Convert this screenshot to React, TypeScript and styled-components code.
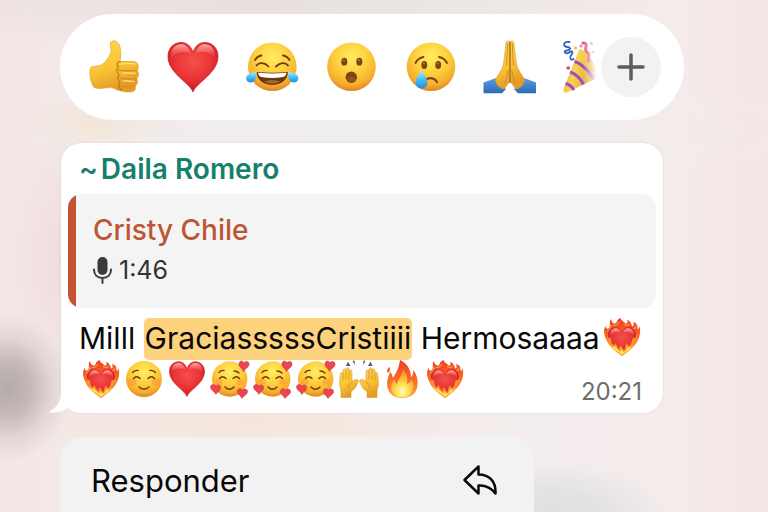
import React from "react";
import styled, { createGlobalStyle } from "styled-components";

const GlobalStyle = createGlobalStyle`
  * { box-sizing: border-box; }
  body {
    margin: 0;
    font-family: Inter, "Liberation Sans", sans-serif;
    color: #080808;
    background: #f5e7e6;
  }
  button { font: inherit; color: inherit; border: 0; padding: 0; cursor: pointer; }
`;

const Page = styled.main`
  min-height: 100vh;
  padding: 14px 84px 0 60px;
  overflow: hidden;
  display: flex;
  flex-direction: column;
  background:
    radial-gradient(ellipse 64px 74px at 8px 388px, #b4aaa9 0%, #c3b8b7 35%, #e2d6d5 68%, transparent 100%),
    radial-gradient(ellipse 120px 60px at 550px 520px, #dfdfdf 0%, #e4e3e3 50%, transparent 100%),
    radial-gradient(ellipse 70px 34px at 96px 122px, #f3e6d8 0%, transparent 100%),
    radial-gradient(ellipse 260px 32px at 260px 424px, #f5e5da 0%, transparent 100%),
    radial-gradient(ellipse 50px 130px at 60px 260px, #f1dcdc 0%, transparent 100%),
    radial-gradient(ellipse 420px 50px at 260px 0, #e6dfdc 0%, transparent 100%),
    radial-gradient(ellipse 420px 60px at 400px 130px, #efeeec 0%, transparent 100%),
    linear-gradient(90deg, #f4e6e6 0, #f3e9e8 60px, #f3eff0 50%, #f5ebeb 680px, #f5e7e6 740px);
`;

const ReactionBar = styled.section`
  height: 106px;
  display: flex;
  align-items: center;
  padding: 0 23px 0 27px;
  border-radius: 53px;
  background: #fff;
`;

const ReactionList = styled.div`
  flex: 1;
  min-width: 0;
  display: flex;
  gap: 25px;
  overflow: hidden;
  mask-image: linear-gradient(90deg, #000 calc(100% - 18px), transparent calc(100% - 4px));
`;

const Reaction = styled.button`
  flex: none;
  width: 54px;
  height: 54px;
  background: none;
  svg { display: block; width: 100%; height: 100%; }
`;

const MoreButton = styled.button`
  flex: none;
  width: 60px;
  height: 60px;
  display: grid;
  place-items: center;
  border-radius: 50%;
  background: #f2f2f2;
`;

const Bubble = styled.article`
  position: relative;
  margin: 23px 21px 0 1px;
  padding: 8px 7px 12px;
  border-radius: 20px;
  background: #fff;
  box-shadow: 0 0 2px rgba(90, 60, 60, 0.16);
`;

const Tail = styled.svg`
  position: absolute;
  left: -12px;
  bottom: 0;
  width: 30px;
  height: 32px;
`;

const Sender = styled.h2`
  display: flex;
  gap: 3px;
  margin: 0;
  padding: 0 11px;
  font-size: 28px;
  line-height: 36px;
  font-weight: 600;
  color: #177f6e;
`;

const Quote = styled.blockquote`
  margin: 7px 0 0;
  height: 114px;
  padding: 18px 25px;
  border-radius: 14px;
  background: linear-gradient(90deg, #c35433 8px, #f4f4f4 8px);
`;

const QuoteAuthor = styled.div`
  font-size: 28px;
  line-height: 36px;
  font-weight: 500;
  color: #bd5636;
`;

const Voice = styled.div`
  display: flex;
  align-items: center;
  gap: 7px;
  margin-top: 4px;
  font-size: 25px;
  line-height: 36px;
  color: #333;
`;

const Body = styled.div`
  display: grid;
  margin-top: 9px;
  padding-left: 11px;
  & > * { grid-area: 1 / 1; }
`;

const Message = styled.p`
  margin: 0;
  font-size: 30px;
  line-height: 42px;
`;

const Highlight = styled.mark`
  padding: 2px 1px 4px;
  border-radius: 5px;
  color: inherit;
  background: #fcd27c;
`;

const InlineEmoji = styled.span`
  display: inline-block;
  width: 38px;
  height: 38px;
  margin: 0 2px 0 3px;
  line-height: 0;
  vertical-align: -7px;
  position: relative;
  svg { width: 100%; height: 100%; overflow: visible; }
`;

const Time = styled.time`
  align-self: end;
  justify-self: end;
  padding-right: 14px;
  font-size: 24px;
  line-height: 18px;
  color: #6d6d6d;
`;

const Menu = styled.nav`
  flex: 1;
  width: 76%;
  margin-top: 24px;
  border-radius: 24px 24px 0 0;
  background: #f3f2f3;
`;

const MenuItem = styled.button`
  width: 100%;
  height: 86px;
  display: flex;
  align-items: center;
  justify-content: space-between;
  padding: 0 37px 0 31px;
  background: none;
  font-size: 31px;
`;

const Defs = styled.svg`
  position: absolute;
  width: 0;
  height: 0;
`;

function Gradients() {
  return (
    <Defs aria-hidden="true">
      <defs>
        <radialGradient id="face" cx="50%" cy="30%" r="70%">
          <stop offset="0" stopColor="#ffee62" />
          <stop offset="0.5" stopColor="#fdce3c" />
          <stop offset="0.82" stopColor="#f6ae2c" />
          <stop offset="1" stopColor="#de8424" />
        </radialGradient>
        <radialGradient id="red" cx="50%" cy="38%" r="62%">
          <stop offset="0" stopColor="#f5504c" />
          <stop offset="0.6" stopColor="#e93334" />
          <stop offset="1" stopColor="#bf1a22" />
        </radialGradient>
        <linearGradient id="shine" x1="0" y1="0" x2="0" y2="1">
          <stop offset="0" stopColor="#ffc4bd" stopOpacity="0.85" />
          <stop offset="1" stopColor="#ff6a60" stopOpacity="0" />
        </linearGradient>
        <linearGradient id="skin" x1="0" y1="0" x2="0.3" y2="1">
          <stop offset="0" stopColor="#ffd84f" />
          <stop offset="0.6" stopColor="#fac336" />
          <stop offset="1" stopColor="#e39a27" />
        </linearGradient>
        <linearGradient id="tear" x1="0" y1="0" x2="0" y2="1">
          <stop offset="0" stopColor="#b5ecff" />
          <stop offset="0.5" stopColor="#4fbff5" />
          <stop offset="1" stopColor="#1d8bdc" />
        </linearGradient>
        <linearGradient id="sleeve" x1="0" y1="0" x2="0" y2="1">
          <stop offset="0" stopColor="#5b9fe4" />
          <stop offset="1" stopColor="#2d68b4" />
        </linearGradient>
        <linearGradient id="cone" x1="0" y1="0" x2="1" y2="0.4">
          <stop offset="0" stopColor="#c98c22" />
          <stop offset="0.45" stopColor="#f9d450" />
          <stop offset="1" stopColor="#dc9e2c" />
        </linearGradient>
        <linearGradient id="flame" x1="0" y1="0" x2="0" y2="1">
          <stop offset="0" stopColor="#ee3f24" />
          <stop offset="0.5" stopColor="#f96a27" />
          <stop offset="1" stopColor="#fda631" />
        </linearGradient>
        <radialGradient id="core" cx="50%" cy="78%" r="65%">
          <stop offset="0" stopColor="#fffbd0" />
          <stop offset="0.35" stopColor="#ffe95a" />
          <stop offset="1" stopColor="#fd9a2c" />
        </radialGradient>
      </defs>
    </Defs>
  );
}

const HEART = "M27 52C24 43 2 33 2 16.500C2 8 8 2.500 15 2.500C21 2.500 25 6 27 12.500C29 6 33 2.500 39 2.500C46 2.500 52 8 52 16.500C52 33 30 43 27 52Z";

function ThumbsUp() {
  return (
    <svg viewBox="0 0 54 54">
      <path fill="url(#skin)" stroke="#e6a32c" strokeWidth="0.7" d="M4 27C9 26 13 26.500 16.500 23.500C20 20 23.500 15 24 11C24.300 8 22.500 5 23.500 2.500C24.500 .5 28.500 0 31 3C34 7 34.500 14 33 21.500L46 21.500C52 21.500 52.500 28 50 30.500C52.500 33 52 37 49.500 38.500C51.500 41 50.500 45 48 46C49.500 50 46.500 52 43 52C35 52 30 50 26 48C20 46.500 15 50 7 47.500C3.500 42 1.500 33 4 27Z" />
      <path fill="none" stroke="#c47a1d" strokeWidth="1.300" strokeLinecap="round" d="M33 21.700C30 22 29 24 31.500 27C29 29 29.500 33 32 35C30 37 30.500 41 33 42.500C31.500 45 32 48 34.500 50" />
      <path fill="none" stroke="#d6912a" strokeWidth="1.400" strokeLinecap="round" d="M32 30.300Q41 31.500 50 30.500M33 38.300Q41 39.500 49.500 38.600M34 46Q41 47 48 46.200" />
      <path fill="none" stroke="#ffe77c" strokeWidth="1.200" strokeLinecap="round" d="M34 24Q42 23 48 24M35 33Q42 32.500 48 33.300M36 41Q42 40.500 47 41.500" />
    </svg>
  );
}

function Heart() {
  return (
    <svg viewBox="0 0 54 54">
      <path fill="url(#red)" stroke="#c91f28" strokeWidth="0.8" d={HEART} />
      <path fill="url(#shine)" d="M5 15C5 8 10 4 15.500 4.200C20 4.500 23 8 24.500 13.500C20 11 9 11 5 19ZM49 15C49 8 44 4 38.500 4.200C34 4.500 31 8 29.500 13.500C34 11 45 11 49 19Z" />
    </svg>
  );
}

function Joy() {
  return (
    <svg viewBox="0 0 54 54">
      <circle cx="27.300" cy="26.700" r="24.300" fill="url(#face)" />
      <path fill="none" stroke="#6f3c10" strokeWidth="1.800" strokeLinecap="round" d="M11.500 25.500C14 22 20 22.500 23.500 26.500M31 26.500C35 22.500 40.500 22 43 25.500M10 20Q12.500 16 16.500 15.500M44.500 20Q42 16 38 15.500" />
      <path fill="#69380f" d="M11.500 32Q27.300 33.500 43 32C42.500 40 36 45 27.300 45S12 40 11.500 32Z" />
      <path fill="#fff" d="M13 32.700Q27.300 34.200 41.500 32.700C41 35.500 40 36.500 38 37Q27 39 16.500 37C14.500 36.500 13.500 35.500 13 32.700Z" />
      <path fill="#a0662f" d="M19 41.500Q27 38.500 35.500 41.500Q27 46 19 41.500Z" />
      <path fill="url(#tear)" d="M11.500 31.500C12 37 10.500 42.500 5.500 42.500C1.500 42.500 0 38.500 2 35.500C4 32.500 8.500 33.500 11.500 31.500ZM43 31.500C42.500 37 44 42.500 49 42.500C53 42.500 54.500 38.500 52.500 35.500C50.500 32.500 46 33.500 43 31.500Z" />
    </svg>
  );
}

function Wow() {
  return (
    <svg viewBox="0 0 54 54">
      <circle cx="27.500" cy="26.700" r="24.300" fill="url(#face)" />
      <ellipse cx="20.300" cy="21.700" rx="3" ry="3.900" fill="#7b4412" />
      <ellipse cx="35.300" cy="21.700" rx="3" ry="3.900" fill="#7b4412" />
      <circle cx="19.900" cy="20.300" r="1" fill="#b98246" />
      <circle cx="34.900" cy="20.300" r="1" fill="#b98246" />
      <circle cx="27.300" cy="37.300" r="5.700" fill="#7b4412" />
      <ellipse cx="27.300" cy="39.500" rx="3.800" ry="3" fill="#8f5517" />
    </svg>
  );
}

function Cry() {
  return (
    <svg viewBox="0 0 54 54">
      <circle cx="28" cy="26.700" r="24.300" fill="url(#face)" />
      <path fill="none" stroke="#7b4412" strokeWidth="1.800" strokeLinecap="round" d="M12.500 23Q15 18 20.500 17M36 17Q41.500 18 44 23" />
      <ellipse cx="21.300" cy="25" rx="2.900" ry="4" fill="#7b4412" />
      <ellipse cx="35.200" cy="25" rx="2.900" ry="4" fill="#7b4412" />
      <circle cx="20.900" cy="23.600" r="1" fill="#b98246" />
      <circle cx="34.800" cy="23.600" r="1" fill="#b98246" />
      <path fill="none" stroke="#7b4412" strokeWidth="2.200" strokeLinecap="round" d="M23 39.500C27 37 32 38 34 42" />
      <path fill="url(#tear)" d="M18.500 29.500C20 34 24.500 38 24.500 42.500C24.500 46 22 48.500 18.500 48.500S12.500 46 12.500 42.500C12.500 38 17 34 18.500 29.500Z" />
    </svg>
  );
}

function Pray() {
  return (
    <svg viewBox="0 0 54 54">
      <path fill="url(#sleeve)" d="M1.500 42.500L14 38L19 46L24 49L20 53.300H1.500ZM54 42.500L42 38L37 46L32 49L36 53.300H54Z" />
      <path fill="url(#skin)" stroke="#dc9828" strokeWidth="0.6" d="M27.800 1.500C24.500 0 24 2 23.800 5L21.500 24C20.500 30 16 34 13.500 40C14 44 17 48 21.500 49C24 48 25 44 27.800 42ZM28.200 1.500C31.500 0 32 2 32.200 5L34.500 24C35.500 30 40 34 42.500 40C42 44 39 48 34.500 49C32 48 31 44 28.200 42Z" />
      <path fill="none" stroke="#a8651b" strokeWidth="1.200" d="M28 2V43" />
      <path fill="none" stroke="#d18b24" strokeWidth="1" strokeLinecap="round" d="M25.700 4L24.700 25M30.300 4L31.300 25M26 31Q25.500 39 22.500 43M30 31Q30.500 39 33.500 43" />
    </svg>
  );
}

function Party() {
  return (
    <svg viewBox="0 0 54 54">
      <path fill="url(#cone)" d="M18.500 9C25 9 36 24 36 38L6 52.500C3.500 53 1.800 51 2.800 48.500Z" />
      <path fill="none" stroke="#a04dc0" strokeWidth="3" d="M13.500 21.500C19 23 29 31 32.500 39.500M9 32C14 33.500 20 38.500 22.500 44.500M4.500 43.500Q10 45 13 50" />
      <path fill="none" stroke="#2d61c9" strokeWidth="1.800" strokeLinecap="round" d="M8.500 2C2 1 1.500 6.500 6 7C11 7.500 9.500 10 6 10.500C1 11.500 5 14.500 8 12.500C12 10 12.500 12.500 10 15.500C8 18 10 21 12.500 19" />
      <path fill="none" stroke="#e6547b" strokeWidth="3" strokeLinecap="round" d="M22 3C29 3 22 9 26 12C30 15 27 17 27.500 21" />
      <circle cx="7.200" cy="28" r="1.800" fill="#d63f62" />
      <circle cx="14.500" cy="8" r="1.800" fill="#f4c84a" />
      <circle cx="20" cy="6" r="1.500" fill="#e779c0" />
      <circle cx="30.500" cy="3.500" r="1.800" fill="#6ca3ea" />
      <circle cx="32" cy="12" r="1.600" fill="#6ca3ea" />
      <path fill="none" stroke="#3aa867" strokeWidth="2" d="M39 14L49 9M38 28Q44 23 51 28" />
    </svg>
  );
}

function BurningHeart() {
  return (
    <svg viewBox="0 0 38 38">
      <path fill="url(#flame)" d="M19 38C14 34 6 29 3.500 22C1 17 0 12 2.500 8C3 10.500 4.500 11.500 6 10C8 7 5.500 4 8 1C8.500 4.500 11 6.500 13 5C14.500 3.500 13.500 1.500 18 0C17.500 2.500 20 2.500 22 5C24 6.500 25.500 5 24 2C27 2.500 28.500 6 29 8C31 9 31 6 30 4C34 5 35 8 34.500 11C36 11 36 10 36.500 8C38 13 37 18 35 22C32 29 24 34 19 38Z" />
      <path fill="none" stroke="#fdb04a" strokeWidth="1" strokeLinecap="round" d="M4.500 13Q7 13 8 7M10.500 7.500Q13.500 8.500 16.500 4M21 6.500Q24 9 26.500 6.500M30 11Q33 11 33 8" />
      <path fill="url(#red)" d="M19 36C17 31 5 25.500 5 17C5 12 8.500 9 12.500 9C15.500 9 18 10.500 19 13.500C20 10.500 22.500 9 25.500 9C29.500 9 33 12 33 17C33 25.500 21 31 19 36Z" />
      <path fill="url(#shine)" d="M7 15.500Q8 10.500 12.500 10.300Q16 10.500 17.500 14Q11 12.500 7 18ZM31 15.500Q30 10.500 25.500 10.300Q22 10.500 20.500 14Q27 12.500 31 18Z" />
      <path fill="#fb902b" d="M19 38C13 33.500 5 29 3.500 18C5.500 21 6.500 21 7 19C9 22 8 25 10 28C12 27 11 26 12 25C13 27 15 28 15.500 31C17 30 17 28 18 27C18 29 20 30 21 32C23 30 21.500 28 24 25C24 27 25.500 27 26.500 28C29.500 25 28 22 30.500 19.500C31 21 33 20 34.500 17C34 28 25 33.500 19 38Z" />
      <path fill="#ffe25c" d="M19 37C14 33 8 30 6 25C8.500 29 11 30 12 28C14 31 16 32 17 34Q18 32 18 31Q20 33 21 34Q24 32 24 29Q27 31 30 27C28 31 23 34 19 37Z" />
    </svg>
  );
}

function Smile() {
  return (
    <svg viewBox="0 0 38 38">
      <circle cx="19" cy="19" r="18" fill="url(#face)" />
      <ellipse cx="7" cy="22" rx="4.500" ry="3.500" fill="#f98a3a" opacity="0.45" />
      <ellipse cx="31" cy="22" rx="4.500" ry="3.500" fill="#f98a3a" opacity="0.45" />
      <path fill="none" stroke="#6f3c10" strokeWidth="1.400" strokeLinecap="round" d="M8.500 18.500Q11.500 15 15 18.500M23 18.500Q26.500 15 29.500 18.500M7.500 12.500Q10 10 13 10.500M30.500 12.500Q28 10 25 10.500M14 27Q19 31.500 24 27" />
    </svg>
  );
}

function LovingFace() {
  return (
    <svg viewBox="0 0 38 38">
      <circle cx="18.700" cy="19" r="17.700" fill="url(#face)" />
      <ellipse cx="8" cy="22" rx="4" ry="3" fill="#f98a3a" opacity="0.4" />
      <ellipse cx="29" cy="22" rx="4" ry="3" fill="#f98a3a" opacity="0.4" />
      <path fill="none" stroke="#6f3c10" strokeWidth="1.400" strokeLinecap="round" d="M8.500 18.500Q11.500 15 15 18.500M22 18.500Q25.500 15 28.500 18.500M8 12.500Q10 10 13 10.500M28 13Q26 11 23 11M14 27Q18.500 31.500 23 27" />
      <g fill="#ec4450" stroke="#c22836" strokeWidth="0.500">
        <path d="M32.500 11.500C31.500 8.500 27.500 7 28 3.500C28.500 .3 32 .3 33 3C34.500 .3 38.500 1.500 38 4.500C37.500 8 33.500 9 32.500 11.500Z" />
        <path d="M5 34.500C3.500 31.500 -.5 30 -.5 27C-.3 23.800 4 23.500 5 26.500C6.500 23.800 10 25 9.500 28C9 31 6 32 5 34.500Z" />
        <path d="M31 38.500C29.500 35.500 26 34 26.500 31C27 28 30.500 28 31.500 30.500C33 28 37 29 36.500 32C36 35 32 36 31 38.500Z" />
      </g>
    </svg>
  );
}

function RaisedHands() {
  return (
    <svg viewBox="0 0 38 38">
      <path fill="#555d63" d="M6 6L8 1.500L10.500 6ZM12.500 1L14.500 .5L15 5ZM23.500 .5L25.500 1L23 5ZM28 6L30.500 1.500L32.500 6Z" />
      <path fill="url(#skin)" stroke="#d99b2d" strokeWidth="0.600" d="M1 37.500V30C-1 26 -.5 20 .5 14C1 11.500 3 12 3 14V11C3 8 6 8 6 11V9.500C6.500 7 9 7.500 9 10V11C10 9 12 10 12 12V22C13.500 19 18 19 18.500 21C17 24 16 29 11 31.500V37.500Z" />
      <path fill="url(#skin)" stroke="#d99b2d" strokeWidth="0.600" d="M37 37.500V30C39 26 38.500 20 37.500 14C37 11.500 35 12 35 14V11C35 8 32 8 32 11V9.500C31.500 7 29 7.500 29 10V11C28 9 26 10 26 12V22C24.500 19 20 19 19.500 21C21 24 22 29 27 31.500V37.500Z" />
      <path fill="none" stroke="#c98725" strokeWidth="0.700" strokeLinecap="round" d="M3 14V20M6 11V19M9 11V19M12 22Q8 24 8 28M35 14V20M32 11V19M29 11V19M26 22Q30 24 30 28" />
    </svg>
  );
}

function Fire() {
  return (
    <svg viewBox="0 0 38 38">
      <path fill="url(#flame)" d="M19 38C10 38 4 32 4 24C4 19 6 16 7 12C9 13 9 16 10 18C13 13 16 8 17 0C24 3 28 10 28 17C30 16 30 12 30.500 10C34 15 35 20 34.500 25C34 33 28 38 19 38ZM5 13C3 11 5 8 7 7C7 10 7 12 5 13Z" />
      <path fill="url(#core)" d="M19 37.500C12 37.500 8 33 8 27.500C8 24 10 21 11 19C12 21 12 23 14 24C15 19 19 16 20 10C24 14 25 18 24 24C27 23 28 21 28.500 19C30 22 31 25 30 29C29 34 25 37.500 19 37.500Z" />
    </svg>
  );
}

const reactions = [
  { label: "Me gusta", Icon: ThumbsUp },
  { label: "Corazón", Icon: Heart },
  { label: "Risa", Icon: Joy },
  { label: "Asombro", Icon: Wow },
  { label: "Tristeza", Icon: Cry },
  { label: "Gracias", Icon: Pray },
  { label: "Fiesta", Icon: Party },
];

const messageEmojis = [
  BurningHeart, BurningHeart, Smile, Heart, LovingFace, LovingFace, LovingFace, RaisedHands, Fire, BurningHeart,
];

export default function App() {
  return (
    <Page>
      <GlobalStyle />
      <Gradients />
      <ReactionBar aria-label="Reacciones">
        <ReactionList>
          {reactions.map(({ label, Icon }) => (
            <Reaction key={label} type="button" aria-label={label}>
              <Icon />
            </Reaction>
          ))}
        </ReactionList>
        <MoreButton type="button" aria-label="Más reacciones">
          <svg width="28" height="28" viewBox="0 0 28 28">
            <path d="M14 2V26M2 14H26" stroke="#5c5c5c" strokeWidth="3.500" strokeLinecap="round" />
          </svg>
        </MoreButton>
      </ReactionBar>

      <Bubble>
        <Tail viewBox="0 0 30 32" aria-hidden="true">
          <path fill="#fff" d="M12 0V10C12 20 9 26 1 30C0 31 .5 31.500 2 31.500C9 31.500 15 30 19 27L30 20V0Z" />
        </Tail>
        <Sender>
          <span>~</span>
          <span>Daila Romero</span>
        </Sender>
        <Quote>
          <QuoteAuthor>Cristy Chile</QuoteAuthor>
          <Voice>
            <svg width="19" height="27" viewBox="0 0 19 27" aria-hidden="true">
              <rect x="4.500" y="0" width="10" height="18" rx="5" fill="#3a3a3a" />
              <path d="M1 12.500C1 18 4.500 21 9.500 21S18 18 18 12.500M9.500 21V26" fill="none" stroke="#3a3a3a" strokeWidth="2" strokeLinecap="round" />
            </svg>
            <span>1:46</span>
          </Voice>
        </Quote>
        <Body>
          <Message>
            Milll <Highlight>GraciasssssCristiiii</Highlight> Hermosaaaa
            {messageEmojis.map((Icon, index) => (
              <InlineEmoji key={index}>
                <Icon />
              </InlineEmoji>
            ))}
          </Message>
          <Time>20:21</Time>
        </Body>
      </Bubble>

      <Menu>
        <MenuItem type="button">
          <span>Responder</span>
          <svg width="34" height="30" viewBox="0 0 34 30" fill="none" stroke="#0a0a0a" strokeWidth="2.500" strokeLinejoin="round" aria-hidden="true">
            <path d="M15.500 1.500L1.500 15L15.500 28.500V20.500C23 20 28 22.500 32.500 28.500C33 17 27 9.500 15.500 9.500Z" />
          </svg>
        </MenuItem>
      </Menu>
    </Page>
  );
}
